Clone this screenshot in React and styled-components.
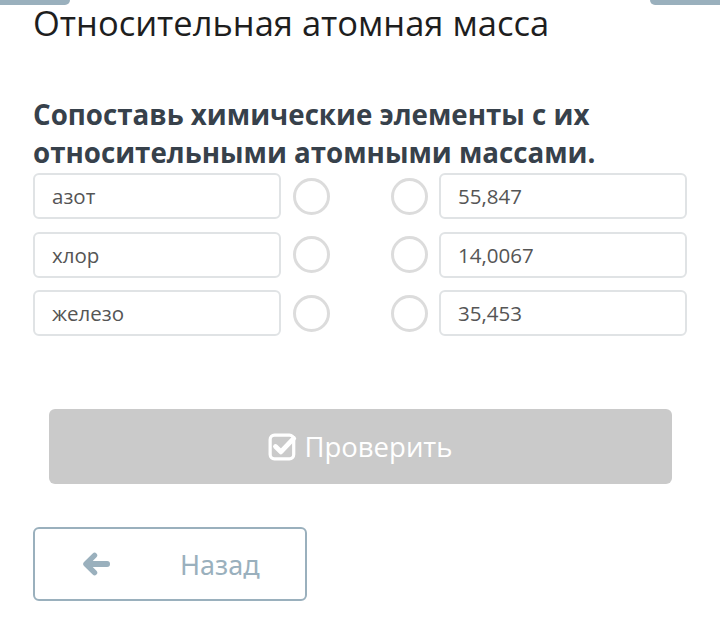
import styled, { createGlobalStyle } from "styled-components";

const GlobalStyle = createGlobalStyle`
  body {
    margin: 0;
    background: #fff;
    font-family: "Open Sans", "Noto Sans", sans-serif;
  }
`;

const rows = [
  { left: "азот", right: "55,847" },
  { left: "хлор", right: "14,0067" },
  { left: "железо", right: "35,453" },
];

export default function App() {
  return (
    <Page>
      <GlobalStyle />
      <TopEdge>
        <Tab side="left" />
        <Tab side="right" />
      </TopEdge>
      <Title>Относительная атомная масса</Title>
      <Question>Сопоставь химические элементы с их относительными атомными массами.</Question>
      <Match>
        {rows.map((r) => (
          <Row key={r.left}>
            <Cell>{r.left}</Cell>
            <Dot />
            <span />
            <Dot />
            <Cell>{r.right}</Cell>
          </Row>
        ))}
      </Match>
      <CheckButton>
        <svg width="30" height="30" viewBox="0 0 28 28">
          <rect x="2" y="3" width="22" height="22" rx="4" fill="none" stroke="#fff" strokeWidth="3" />
          <path d="M7 13.5 L12 18.5 L24 6" fill="none" stroke="#fff" strokeWidth="4.5" strokeLinecap="round" strokeLinejoin="round" />
        </svg>
        Проверить
      </CheckButton>
      <BackButton>
        <svg width="27" height="24" viewBox="0 0 28 24">
          <path d="M12 3 L3 12 L12 21" fill="none" stroke="#9ab0bd" strokeWidth="5.5" strokeLinecap="round" strokeLinejoin="round" />
          <path d="M5 12 H25" stroke="#9ab0bd" strokeWidth="6" strokeLinecap="round" />
        </svg>
        <BackLabel>Назад</BackLabel>
      </BackButton>
    </Page>
  );
}

const Page = styled.div`
  width: 720px;
  height: 643px;
  box-sizing: border-box;
  padding: 0 32px 0 33px;
  display: flex;
  flex-direction: column;
`;

const TopEdge = styled.div`
  display: flex;
  justify-content: space-between;
  margin: 0 -32px 0 -33px;
  height: 5px;
`;

const Tab = styled.div`
  width: 70px;
  height: 5px;
  background: #9ab0bd;
  border-radius: ${(p) => (p.side === "left" ? "0 0 6px 0" : "0 0 0 6px")};
`;

const Title = styled.h1`
  margin: 0;
  font-weight: 400;
  font-size: 34.5px;
  line-height: 36px;
  color: #1e1e1e;
`;

const Question = styled.h2`
  margin: 54px 0 0;
  font-weight: 700;
  font-size: 27.7px;
  line-height: 38px;
  color: #37414b;
  width: 640px;
`;

const Match = styled.div`
  display: flex;
  flex-direction: column;
  gap: 12.5px;
  margin-top: 2px;
`;

const Row = styled.div`
  display: grid;
  grid-template-columns: 248px 60px 38px 60px 248px;
  align-items: center;
`;

const Cell = styled.div`
  height: 46px;
  box-sizing: border-box;
  border: 2px solid #e0e3e5;
  border-radius: 6px;
  padding-left: 17px;
  display: flex;
  align-items: center;
  font-size: 20.5px;
  color: #555;
`;

const Dot = styled.div`
  width: 37px;
  height: 37px;
  box-sizing: border-box;
  border: 3px solid #dcdcdc;
  border-radius: 50%;
  justify-self: center;
`;

const CheckButton = styled.div`
  margin: 73px 16px 0 16px;
  height: 75px;
  background: #cacaca;
  border-radius: 6px;
  display: flex;
  align-items: center;
  justify-content: center;
  gap: 6px;
  color: #fff;
  font-size: 27.5px;
`;

const BackButton = styled.div`
  margin-top: 43px;
  width: 274px;
  height: 74px;
  box-sizing: border-box;
  border: 2px solid #9ab0bd;
  border-radius: 6px;
  display: flex;
  align-items: center;
  padding-left: 48px;
`;

const BackLabel = styled.span`
  margin-left: 70px;
  font-size: 27px;
  color: #9ab0bd;
  font-family: "Noto Sans", "Open Sans", sans-serif;
`;
